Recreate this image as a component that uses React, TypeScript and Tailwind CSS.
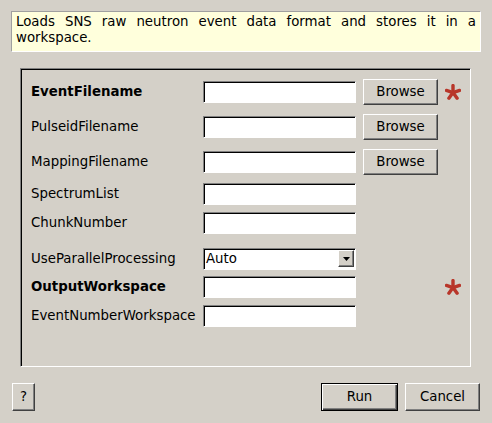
import React from 'react';

// Qt-style algorithm dialog: help text, property grid, and the button row

const font = { fontFamily: '"DejaVu Sans", Verdana, sans-serif' };

const inputCls =
  'h-[22px] w-[153px] bg-white border border-t-[#808080] border-l-[#808080] border-b-white border-r-white shadow-[inset_1px_1px_0_#000]';

const buttonCls =
  'flex items-center justify-center bg-[#d4d0c8] text-[13.33px] text-black border border-t-white border-l-white border-b-[#404040] border-r-[#404040] shadow-[inset_-1px_-1px_0_#808080]';

function Asterisk() {
  return (
    <svg width="16" height="16" viewBox="0 0 16 16" className="block">
      <g stroke="#b8362a" strokeWidth="3.4" strokeLinecap="round">
        <line x1="8" y1="8.6" x2="8" y2="1.6" />
        <line x1="8" y1="8.6" x2="14.6" y2="6.4" />
        <line x1="8" y1="8.6" x2="12.1" y2="14.2" />
        <line x1="8" y1="8.6" x2="3.9" y2="14.2" />
        <line x1="8" y1="8.6" x2="1.4" y2="6.4" />
      </g>
    </svg>
  );
}

interface RowProps {
  label: string;
  bold?: boolean;
  browse?: boolean;
  required?: boolean;
  combo?: boolean;
  className?: string;
}

function Row({ label, bold, browse, required, combo, className = '' }: RowProps) {
  return (
    <div className={`flex items-center ${browse ? 'h-[26px]' : 'h-[22px]'} ${className}`}>
      <div className={`w-[172px] text-[13.33px] leading-4 text-black ${bold ? 'font-bold' : ''}`}>
        {label}
      </div>
      {combo ? (
        <div className={`${inputCls} relative flex items-center pl-[2px] text-[13.33px] text-black`}>
          Auto
          <div className="absolute right-[1px] top-[1px] w-[16px] h-[17px] flex items-center justify-center bg-[#d4d0c8] border border-t-white border-l-white border-b-[#404040] border-r-[#404040] shadow-[inset_-1px_-1px_0_#808080]">
            <svg width="7" height="4" viewBox="0 0 7 4" className="block">
              <path d="M0 0h7L3.5 4z" fill="#000" />
            </svg>
          </div>
        </div>
      ) : (
        <div className={inputCls} />
      )}
      {browse ? (
        <button className={`${buttonCls} ml-[7px] w-[75px] h-[26px]`}>Browse</button>
      ) : (
        <div className="ml-[7px] w-[75px]" />
      )}
      <div className="ml-[7px] w-[16px]">{required && <Asterisk />}</div>
    </div>
  );
}

export default function App() {
  return (
    <div className="w-[492px] h-[423px] bg-[#d4d0c8] pt-[11px] flex flex-col overflow-hidden" style={font}>
      {/* Help text */}
      <div className="mx-[11px] h-[41px] bg-[#ffffdc] border border-t-[#a0a0a0] border-l-[#a0a0a0] border-b-white border-r-white pl-[4px] pr-[4px] pt-[2px] text-[13.33px] leading-4 text-black text-justify">
        Loads SNS raw neutron event data format and stores it in a workspace.
      </div>

      {/* Properties frame */}
      <div className="ml-[20px] mt-[16px] w-[451px] h-[299px] border border-t-[#808080] border-l-[#808080] border-b-white border-r-white shadow-[inset_1px_1px_0_#000] pt-[10px] pl-[10px]">
        <Row label="EventFilename" bold browse required />
        <Row label="PulseidFilename" browse className="mt-[9px]" />
        <Row label="MappingFilename" browse className="mt-[9px]" />
        <Row label="SpectrumList" className="mt-[8px]" />
        <Row label="ChunkNumber" className="mt-[7px]" />
        <Row label="UseParallelProcessing" combo className="mt-[14px]" />
        <Row label="OutputWorkspace" bold required className="mt-[6px]" />
        <Row label="EventNumberWorkspace" className="mt-[7px]" />
      </div>

      {/* Bottom buttons */}
      <div className="mt-[16px] px-[12px] flex justify-between">
        <button className={`${buttonCls} w-[23px] h-[28px] text-[12px]`}>?</button>
        <div className="flex gap-[7px]">
          <button className="flex items-center justify-center w-[77px] h-[28px] bg-[#d4d0c8] text-[13.33px] text-black border border-black shadow-[inset_1px_1px_0_#fff,inset_-1px_-1px_0_#404040,inset_-2px_-2px_0_#808080]">
            Run
          </button>
          <button className={`${buttonCls} w-[75px] h-[28px]`}>Cancel</button>
        </div>
      </div>
    </div>
  );
}
